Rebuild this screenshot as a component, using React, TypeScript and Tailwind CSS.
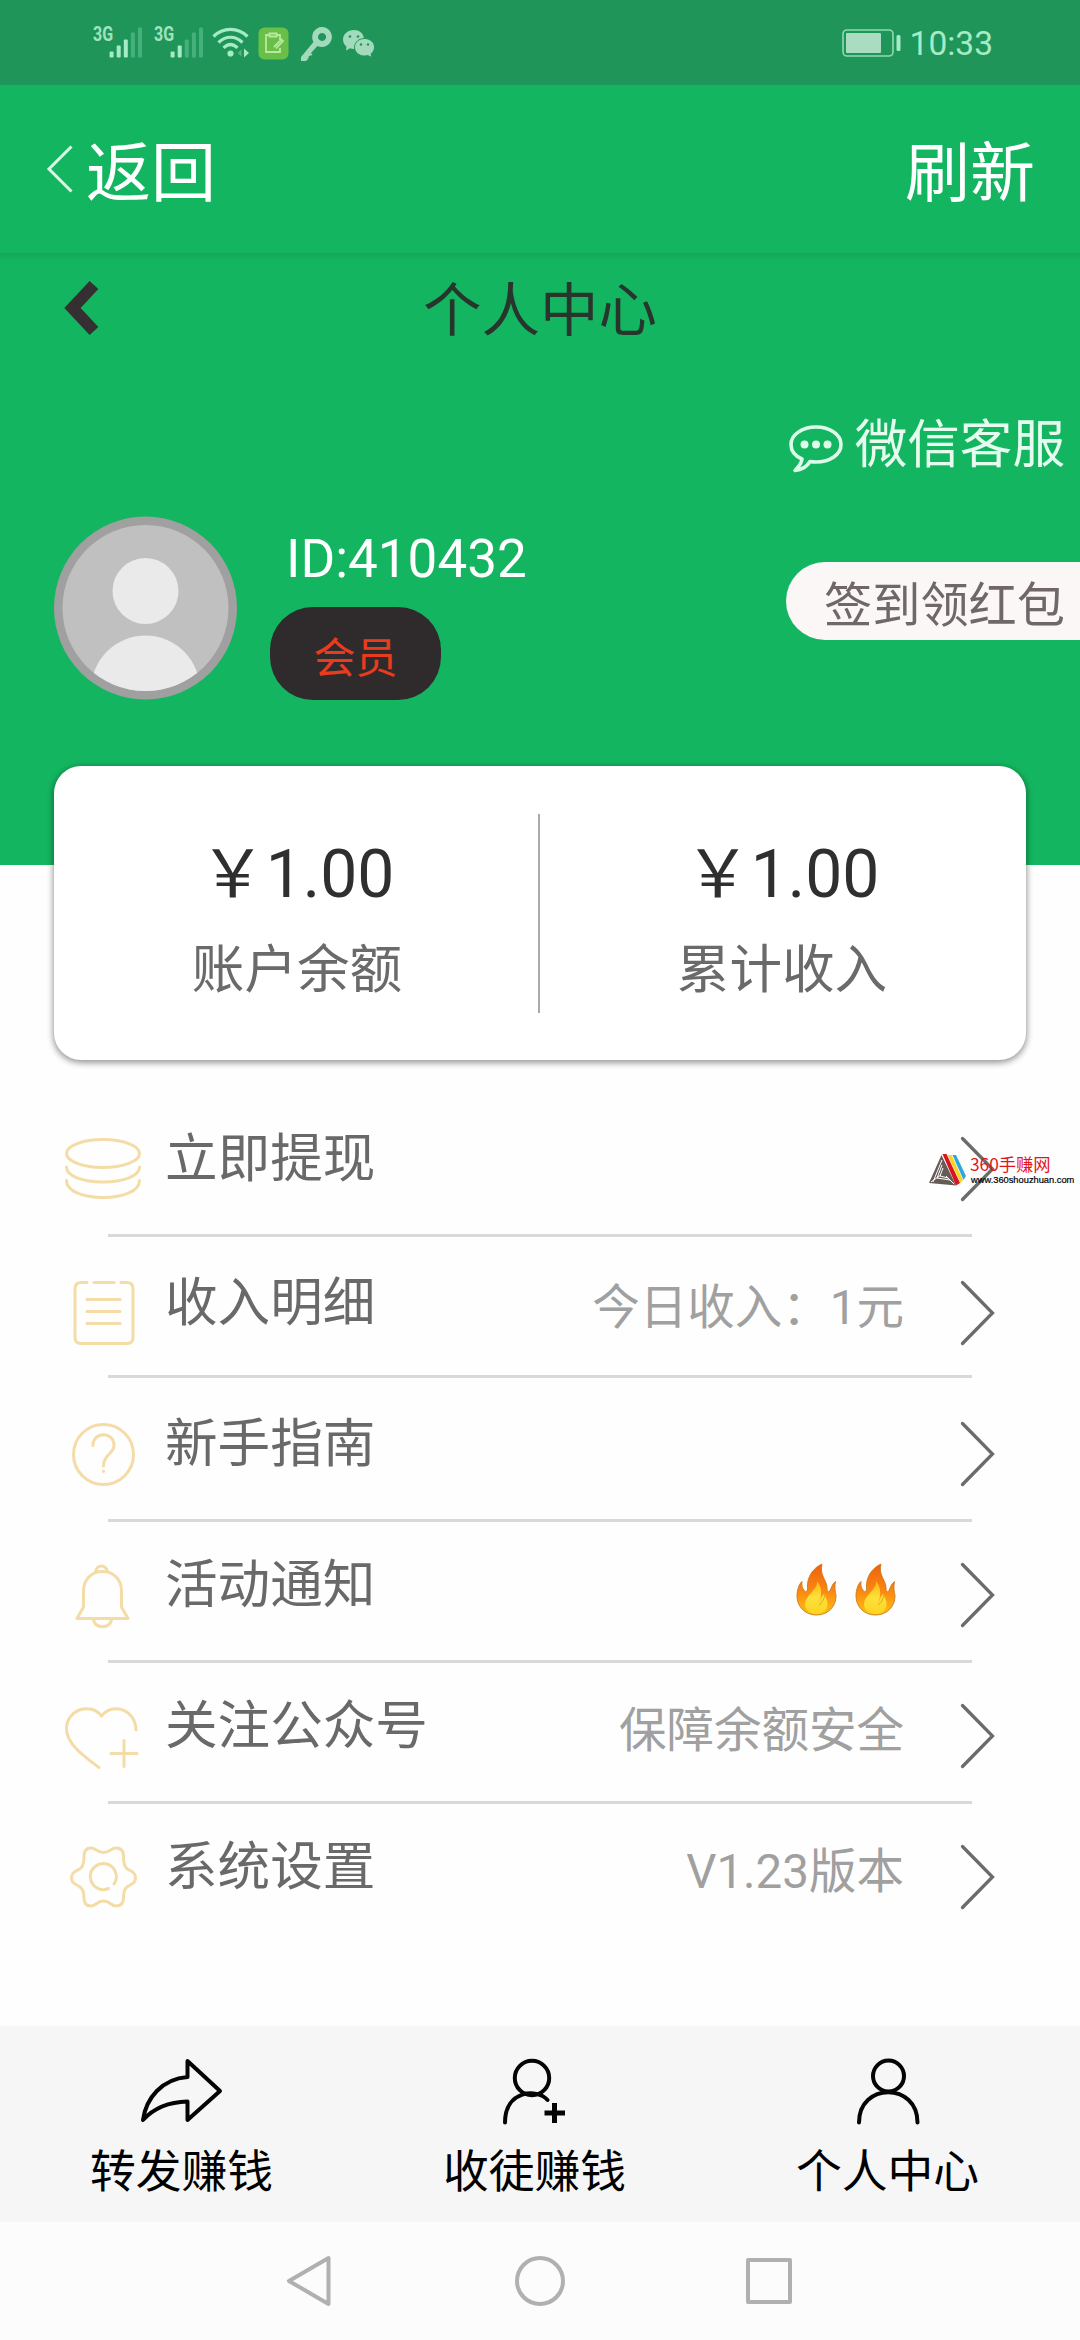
import type { ReactNode } from "react";

const GOLD = "#f4dca6";

function Signal({ active }: { active: number }) {
  const bars = [6, 12, 18, 25, 30];
  return (
    <div className="flex h-[31px] items-start">
      <span className="w-[16px] origin-left scale-x-[0.8] text-[20px] leading-[14px] font-bold text-[#9fe3bf]">3G</span>
      <svg className="h-[31px] w-[33px]" viewBox="0 0 33 31">
        {bars.map((h, i) => (
          <rect key={h} x={i * 7.1 + 0.6} y={30.5 - h} width="4" height={h} rx="1" fill={i < active ? "#a5ebc6" : "#46b07c"} />
        ))}
      </svg>
    </div>
  );
}

function StatusBar() {
  return (
    <div className="flex h-[85px] items-start bg-[#1f955a] pt-[27px]">
      <div className="ml-[93px]"><Signal active={3} /></div>
      <div className="ml-[12px]"><Signal active={2} /></div>
      <svg className="ml-[9px] h-[32px] w-[38px]" viewBox="0 0 38 32" fill="none" stroke="#a5ebc6" strokeWidth="3.2">
        <path d="M1.5 9.5C11 0 26 0 35.5 9.5M6.5 15.500C13.500 8.500 23.500 8.500 30.500 15.500M11.500 20.800C16 16.500 21 16.500 25.500 20.800" />
        <circle cx="18.500" cy="26.500" r="3.100" fill="#a5ebc6" stroke="none" />
        <path d="M32 21.500V30.500L37 26Z" fill="#a5ebc6" stroke="none" />
        <path d="M29.500 22.500V29.500L25.500 26Z" fill="#4eb482" stroke="none" />
      </svg>
      <svg className="ml-[8px] h-[33px] w-[31px]" viewBox="0 0 31 33" fill="none" stroke="#b9e9a0" strokeWidth="1.800">
        <rect x="0.500" y="0.500" width="30" height="32" rx="6" fill="#69bf47" stroke="none" />
        <path d="M11 8H8V25H22V21M19 8H22V13M11.500 6.500H18.500V9.500H11.500ZM16 20L23.500 12.500L25 14L18 21.500" />
      </svg>
      <svg className="ml-[12px] h-[34px] w-[32px]" viewBox="0 0 32 34">
        <path fill="#a3dabb" fillRule="evenodd" d="M21 0a10 10 0 1 1-4.500 19L10 26l1.500 2L8 29l-1 3-2 2H0v-4L12.500 15A10 10 0 0 1 21 0Zm0 6a4 4 0 1 0 .1 0Z" />
      </svg>
      <svg className="mt-[3px] ml-[10px] h-[28px] w-[32px]" viewBox="0 0 32 28">
        <path fill="#a3dabb" d="M11 0C5 0 0 4 0 9.500c0 3 1.500 5.500 3.500 7L3 20.500l4-2.200c1.200.4 2.600.6 4 .6C17 19 21 15 21 9.500S17 0 11 0Z" />
        <path fill="#a3dabb" stroke="#1f955a" strokeWidth="1" d="M21.500 8.500c-5.500 0-10 3.700-10 8.700s4.500 8.800 10 8.800c1.200 0 2.300-.2 3.300-.5l4 2-.7-3.700c2-1.500 3.400-3.900 3.400-6.600 0-5-4.500-8.700-10-8.700Z" />
        <g fill="#1f955a"><circle cx="7" cy="6.500" r="1.300" /><circle cx="15" cy="6.500" r="1.300" /><circle cx="18" cy="14.500" r="1.200" /><circle cx="25" cy="14.500" r="1.200" /></g>
      </svg>
      <svg className="mt-[2px] ml-auto h-[28px] w-[60px]" viewBox="0 0 60 28">
        <rect x="1" y="1" width="50" height="26" rx="4" fill="none" stroke="#8fdcb2" strokeWidth="1.600" />
        <rect x="4" y="4" width="35" height="20" rx="1" fill="#a9dcc0" />
        <rect x="54.500" y="6" width="4" height="16" rx="1.500" fill="#a5ebc6" />
      </svg>
      <span className="mr-[87px] ml-[8px] text-[33.500px] leading-[34px] text-[#a5ebc6]">10:33</span>
    </div>
  );
}

function TopNav() {
  return (
    <div className="flex h-[168px] items-center justify-between pr-[45px] pl-[46px] text-[65px] leading-[90px] text-white">
      <div className="flex items-center">
        <svg className="mr-[13px] h-[50px] w-[27px]" viewBox="0 0 27 50" fill="none" stroke="#d9f9e6" strokeWidth="3">
          <path d="M25.500 2.500L3 25L25.500 47.500" />
        </svg>
        <span className="pt-[10px]">返回</span>
      </div>
      <span className="pt-[10px]">刷新</span>
    </div>
  );
}

function Avatar() {
  return (
    <svg className="ml-[54px] h-[184px] w-[183px]" viewBox="0 0 183 184">
      <defs>
        <clipPath id="face"><circle cx="91.500" cy="92" r="83" /></clipPath>
      </defs>
      <circle cx="91.500" cy="92" r="91.500" fill="#a0a0a0" />
      <circle cx="91.500" cy="92" r="83" fill="#c0c0c0" />
      <g clipPath="url(#face)" fill="#eaeaea">
        <circle cx="91.500" cy="75" r="33" />
        <circle cx="91.500" cy="174" r="54.500" />
      </g>
    </svg>
  );
}

function Profile() {
  return (
    <div className="h-[612px] bg-linear-to-b from-[#12a757] to-[#14b560] to-[8px]">
      <div className="relative flex h-[110px] items-center justify-center pt-[5px]">
        <svg className="absolute top-[27px] left-[63px] h-[56px] w-[36px]" viewBox="0 0 36 56" fill="none" stroke="#352f31" strokeWidth="12">
          <path d="M31 5L9.500 28L31 51" />
        </svg>
        <h1 className="text-[58.500px] leading-[80px] text-[#27352d]">个人中心</h1>
      </div>
      <div className="flex h-[153px] justify-end pt-[45px] pr-[15px]">
        <svg className="mt-[17px] mr-[12px] h-[48px] w-[54px]" viewBox="0 0 54 48" fill="none" stroke="#dcfbe9" strokeWidth="3.600" strokeLinejoin="round">
          <path d="M27 2C13 2 2 9.800 2 19.500c0 6.500 4 11.500 11 14.500-.5 4.500-3.500 8-7 11.500 7.500-.8 12-4 15-9 2 .4 4 .5 6 .5 14 0 25-7.500 25-17.500S41 2 27 2Z" />
          <g fill="#dcfbe9" stroke="none"><circle cx="15.500" cy="19.500" r="4" /><circle cx="27" cy="19.500" r="4" /><circle cx="38.500" cy="19.500" r="4" /></g>
        </svg>
        <span className="h-[74px] text-[52.600px] leading-[74px] text-[#e4fdef]">微信客服</span>
      </div>
      <div className="flex items-start">
        <Avatar />
        <div className="ml-[33px] flex flex-col items-start">
          <span className="ml-[16px] h-[91px] text-[53px] leading-[86px] text-white">ID:410432</span>
          <span className="h-[93px] w-[171px] rounded-[43px] bg-[#2f2b2c] pt-[1px] text-center text-[42px] leading-[101px] text-[#e93b1d]">会员</span>
        </div>
        <button className="mt-[46px] ml-auto h-[78px] w-[294px] rounded-l-full bg-[#fbf7f6] pl-[38px] text-left text-[48.200px] leading-[88px] whitespace-nowrap text-[#6f6768]">签到领红包</button>
      </div>
    </div>
  );
}

function Amount({ value, label }: { value: string; label: string }) {
  return (
    <div className="flex w-[486px] flex-col items-center pt-[64px]">
      <span className="text-[66px] leading-[90px] text-[#2f2f2f]">{value}</span>
      <span className="mt-[10px] text-[52.600px] leading-[80px] text-[#6a6a6a]">{label}</span>
    </div>
  );
}

function BalanceCard() {
  return (
    <div className="relative mx-[54px] -mt-[99px] flex h-[294px] rounded-[27px] bg-white shadow-[0_2px_6px_1px_rgba(0,0,0,0.4)]">
      <Amount value="￥1.00" label="账户余额" />
      <div className="mt-[48px] -mr-[1px] -ml-[2px] h-[199px] w-[2px] shrink-0 bg-[#aaaaaa]" />
      <Amount value="￥1.00" label="累计收入" />
    </div>
  );
}

const icons: Record<string, ReactNode> = {
  coins: (
    <>
      <ellipse cx="41" cy="24.500" rx="36.500" ry="14" />
      <path d="M4.500 38C4.500 47 20.500 53 41 53S77.500 47 77.500 38M4.500 51.500C4.500 62 20.500 68.500 41 68.500S77.500 62 77.500 51.500" />
    </>
  ),
  list: (
    <>
      <path d="M25 9.500H19Q13 9.500 13 15.500V64.500Q13 70.500 19 70.500H65Q71 70.500 71 64.500V15.500Q71 9.500 65 9.500H59M32 9.500H52" />
      <path d="M25 26.500H58M25 38.500H58M25 50.500H58" />
    </>
  ),
  help: (
    <>
      <circle cx="41.500" cy="40.500" r="30" />
      <path d="M31 31.500C31 17 52 17 52 31.500C52 40 41.500 40 41.500 52M41.500 57V57.500" />
    </>
  ),
  bell: (
    <path d="M33.500 16.500Q35 11 39.500 11T45.500 16.500M15 63.500L21.500 52V36C21.500 10 59.500 10 59.500 36V52L66 63.500ZM31.500 65C34 74 47 74 49.500 65" />
  ),
  heart: (
    <>
      <path d="M37 71.500C23 61 4.500 48 4.500 33C4.500 13 29 6 39.500 20C50 6 73.500 13 74 34" />
      <path d="M62 44.500V70.500M49 57.500H75" />
    </>
  ),
  gear: (
    <>
      <path d="M41.500 15.500C48 15.500 49 11 54 11C59 11 61.500 14 61.500 19C61.500 30 64 32 69 34C72 35.500 73.500 37.500 73.500 41S72 46 69 47.500C64 50 61.500 52 61.500 61C61.500 66 59 69 54 69C49 69 48 64 41.500 64C35 64 34 69 29 69C24 69 22 66 22 61C22 52 19 50 14 47.500C11 46 9.500 44.500 9.500 41S11 35.500 14 34C19 32 22 30 22 19C22 14 24 11 29 11C34 11 35 15.500 41.500 15.500Z" />
      <path d="M52 47A13 13 0 1 0 46.500 51.500" />
    </>
  ),
};

function Flame() {
  return (
    <svg className="h-[53px] w-[41px]" viewBox="0 0 41 53">
      <defs>
        <linearGradient id="outer" x1="0" y1="0" x2="0" y2="1">
          <stop offset="0" stopColor="#ef5f10" /><stop offset="0.550" stopColor="#fb8a10" /><stop offset="1" stopColor="#fbc414" />
        </linearGradient>
        <linearGradient id="inner" x1="0" y1="0" x2="0" y2="1">
          <stop offset="0" stopColor="#fdb515" /><stop offset="0.500" stopColor="#fee03a" /><stop offset="1" stopColor="#fcd420" />
        </linearGradient>
      </defs>
      <path fill="url(#outer)" stroke="#c9781c" strokeWidth="0.900" d="M26 1C17 5 11 14 11.500 24C12 28 10 30 8.500 28C6 25 5.500 22 6 18.500C3 21 1 27 1 33C1 44 9.500 52 20.500 52S40 44 40 33C40 30 38 27 39.500 18.500C36 21 35.500 25 34 27.500C32 30 31 28 31 25C31 17 23 12 26 1Z" />
      <path fill="url(#inner)" d="M21 18C22 27 10 31 9 41C9 47 14 51 20.500 51S32 47 31.500 40C31.500 36 29 35 29 31C25 32 25 38 23 40C27 32 25 22 21 18Z" />
      <path fill="none" stroke="#d9a81c" strokeWidth="1" d="M29 31C28 36 27 39 23 42" />
    </svg>
  );
}

type RowProps = { icon: string; label: string; value?: ReactNode; className: string; overlay?: ReactNode };

function MenuRow({ icon, label, value, className, overlay }: RowProps) {
  return (
    <div className={"relative flex items-start pr-[84px] pl-[62px] " + className}>
      <svg className="mt-[10px] h-[82px] w-[82px]" viewBox="0 0 82 82" fill="none" stroke={GOLD} strokeWidth="3" strokeLinecap="round" strokeLinejoin="round">
        {icons[icon]}
      </svg>
      <span className="ml-[21px] text-[52.600px] leading-[80px] text-[#696969]">{label}</span>
      <div className="mt-[5px] mr-[54px] ml-auto text-[47.500px] leading-[80px] text-[#a0a0a0]">{value}</div>
      <svg className="mt-[17px] h-[66px] w-[38px]" viewBox="0 0 38 66" fill="none" stroke="#6b6b6b" strokeWidth="3.300" strokeLinecap="round">
        <path d="M4.500 2.500L34.500 33L4.500 63.500" />
      </svg>
      {overlay}
    </div>
  );
}

function Line() {
  return <div className="mx-[108px] h-[3px] bg-[#d9d9d9]" />;
}

function Watermark() {
  return (
    <div className="absolute top-[56px] left-[929px] flex">
      <svg className="h-[36px] w-[38px]" viewBox="0 0 38 36">
        <path d="M12.500 3L0 31L27 33.500Z" fill="#675b58" />
        <path d="M13 8L4 30M13 13L8 26L21 28M14 16L11 24L19 26M2 30L12 23M25 32L17 24" stroke="#fff" strokeWidth="1" fill="none" />
        <path d="M13.500 2H17.500L31 31L27 33.500Z" fill="#d7141f" />
        <path d="M18.500 3H22.500L34 28L31.500 31Z" fill="#f9d423" />
        <path d="M23.500 3H27L37 24L34.500 28Z" fill="#29a8df" />
      </svg>
      <div className="ml-[3px] flex flex-col">
        <span className="h-[20px] font-['Noto_Sans_CJK_SC'] text-[17.300px] leading-[24px] whitespace-nowrap text-[#e5131d]">360手赚网</span>
        <span className="ml-[1px] font-['Liberation_Sans'] text-[9.300px] leading-[17px] whitespace-nowrap text-black [-webkit-text-stroke:0.2px_black]">www.360shouzhuan.com</span>
      </div>
    </div>
  );
}

function Menu() {
  return (
    <div className="mt-[36px] h-[930px]">
      <MenuRow className="h-[138px] pt-[23px]" icon="coins" label="立即提现" overlay={<Watermark />} />
      <Line />
      <MenuRow className="h-[138px] pt-[26px]" icon="list" label="收入明细" value="今日收入：1元" />
      <Line />
      <MenuRow className="h-[141px] pt-[26px]" icon="help" label="新手指南" />
      <Line />
      <MenuRow
        className="h-[138px] pt-[23px]"
        icon="bell"
        label="活动通知"
        value={<div className="flex gap-[18px] pt-[13px] pr-[8px]"><Flame /><Flame /></div>}
      />
      <Line />
      <MenuRow className="h-[138px] pt-[23px]" icon="heart" label="关注公众号" value="保障余额安全" />
      <Line />
      <MenuRow className="h-[138px] pt-[23px]" icon="gear" label="系统设置" value="V1.23版本" />
    </div>
  );
}

function Tab({ label, children }: { label: string; children: ReactNode }) {
  return (
    <div className="flex w-[353px] flex-col items-center pt-[30px]">
      <svg className="h-[70px] w-[90px]" viewBox="0 0 90 70" fill="none" stroke="#050505" strokeWidth="4" strokeLinejoin="round" strokeLinecap="round">
        {children}
      </svg>
      <span className="mt-[17px] text-[45.800px] leading-[60px] text-black">{label}</span>
    </div>
  );
}

function TabBar() {
  return (
    <div className="flex h-[196px] bg-[#f6f6f6] pl-[5px]">
      <Tab label="转发赚钱">
        <path d="M50.500 5L83 35L50.500 64V45.500C32 46 16 53 6 64C9 42 25 23 50.500 21Z" />
      </Tab>
      <Tab label="收徒赚钱">
        <circle cx="42" cy="22" r="17.200" />
        <path d="M15 66.500C15 34 47 32 57.500 44" />
        <path d="M64.500 47V67M54.500 57H75" strokeWidth="5" strokeLinecap="butt" />
      </Tab>
      <Tab label="个人中心">
        <circle cx="45.500" cy="20" r="15.500" />
        <path d="M16 66.500C16 26 74.500 26 74.500 66.500" />
      </Tab>
    </div>
  );
}

function SystemNav() {
  return (
    <div className="flex h-[118px] items-start bg-[#fcfcfc] pt-[33px] pl-[286px]">
      <svg className="h-[52px] w-[46px]" viewBox="0 0 46 52" fill="none" stroke="#b0b0b0" strokeWidth="4" strokeLinejoin="round">
        <path d="M42.500 3V49L3 26Z" />
      </svg>
      <svg className="ml-[182px] h-[52px] w-[52px]" viewBox="0 0 52 52" fill="none" stroke="#b0b0b0" strokeWidth="4">
        <circle cx="26" cy="26" r="23" />
      </svg>
      <svg className="ml-[178px] h-[52px] w-[50px]" viewBox="0 0 50 52" fill="none" stroke="#b0b0b0" strokeWidth="4" strokeLinejoin="round">
        <rect x="4" y="5" width="42" height="42" />
      </svg>
    </div>
  );
}

export default function App() {
  return (
    <div className="h-[2340px] w-[1080px] overflow-hidden bg-[#fefefe] font-[Roboto,'Noto_Sans_CJK_SC',sans-serif]">
      <header className="bg-[#14b560]">
        <StatusBar />
        <TopNav />
      </header>
      <Profile />
      <BalanceCard />
      <Menu />
      <TabBar />
      <SystemNav />
    </div>
  );
}
